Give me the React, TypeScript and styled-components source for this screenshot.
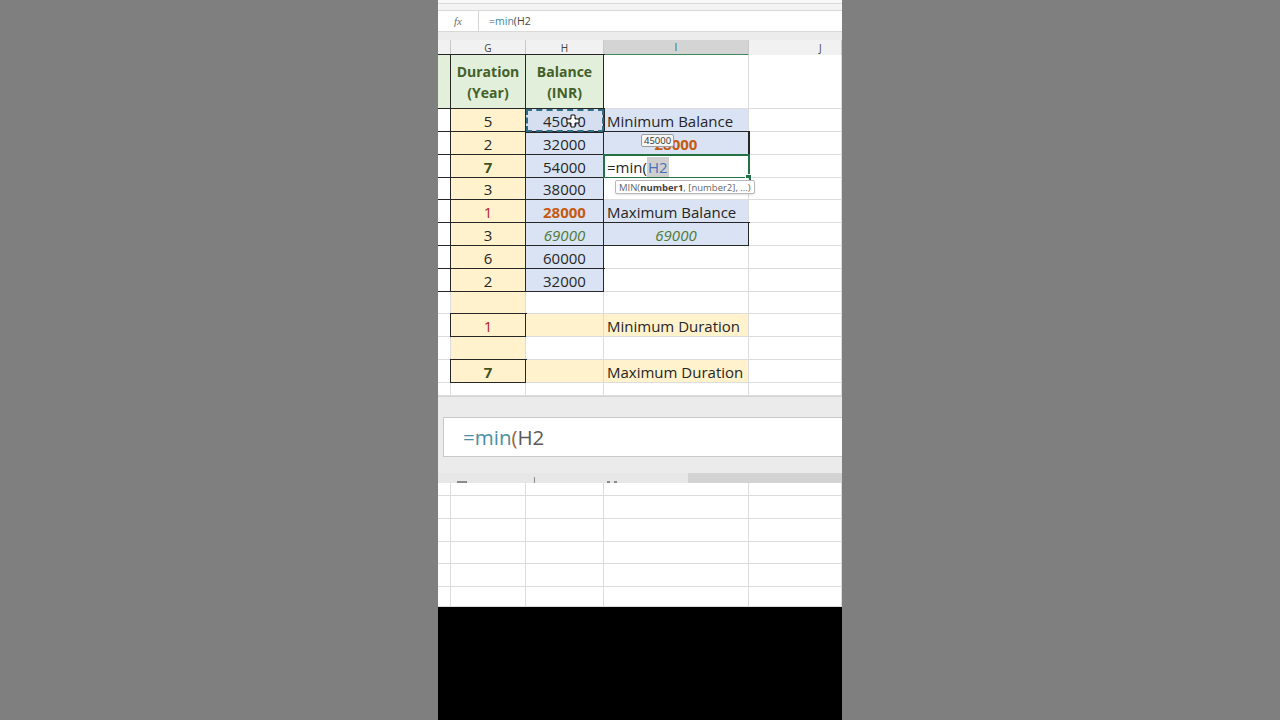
import React from 'react';
import styled, { createGlobalStyle } from 'styled-components';

const GlobalStyle = createGlobalStyle`
  html, body {
    margin: 0;
    padding: 0;
  }
  body {
    background: #7f7f7f;
    font-family: "Open Sans", "Liberation Sans", sans-serif;
  }
`;

// widths of the visible columns: sliver of F, G, H, I, J
const COLUMNS = '13px 75px 78px 145px 93px';
const GRID = '#dcdcdc';
const INK = '#262626';
const YELLOW = '#fff2cc';
const BLUE = '#dae3f3';
const GREEN = '#e2efda';

const Page = styled.div`
  display: flex;
  width: 1280px;
  height: 720px;
  background: #7f7f7f;
  overflow: hidden;
`;

const Side = styled.div`
  flex: 0 0 438px;
  background: #7f7f7f;
`;

const Screen = styled.div`
  flex: 0 0 404px;
  display: flex;
  flex-direction: column;
  background: #fff;
  overflow: hidden;
`;

const Ribbon = styled.div`
  height: 10px;
  box-sizing: border-box;
  background: #f4f4f4;
  border-top: 3px solid #f7f7f7;
  box-shadow: inset 0 1px 0 #dadada;
`;

const FormulaBar = styled.div`
  display: flex;
  height: 22px;
  box-sizing: border-box;
  background: #fff;
  border-top: 1px solid #d9d9d9;
  border-bottom: 1px solid #d9d9d9;
`;

const FxBox = styled.div`
  flex: 0 0 40px;
  display: flex;
  align-items: center;
  justify-content: center;
  border-right: 1px solid #d4d4d4;
  font-family: "Liberation Serif", serif;
  font-style: italic;
  font-size: 11px;
  color: #6d6d6d;
`;

const FormulaInput = styled.div`
  display: flex;
  align-items: center;
  padding-left: 10px;
  font-size: 10.5px;
  color: #444;
`;

const Tint = styled.span<{ $color: string }>`
  color: ${(p) => p.$color};
`;

const BarGap = styled.div`
  height: 8px;
  background: #ececec;
`;

const HeadRow = styled.div`
  display: grid;
  grid-template-columns: ${COLUMNS};
  height: 15px;
`;

const HeadCell = styled.div<{ $active?: boolean; $pad?: number }>`
  display: flex;
  align-items: center;
  justify-content: ${(p) => (p.$pad ? 'flex-start' : 'center')};
  padding-left: ${(p) => p.$pad ?? 0}px;
  box-sizing: border-box;
  background: ${(p) => (p.$active ? '#d4d4d4' : '#f1f1f1')};
  border-right: 1px solid #c9c9c9;
  border-bottom: ${(p) => (p.$active ? '2px solid #3f8a5a' : '1px solid #c9c9c9')};
  font-size: 10px;
  color: ${(p) => (p.$active ? '#2f6f45' : '#444')};
`;

const Row = styled.div<{ $h: number }>`
  display: grid;
  grid-template-columns: ${COLUMNS};
  height: ${(p) => p.$h}px;
`;

type CellProps = {
  $bg?: string;
  $box?: boolean;
  $left?: boolean;
  $color?: string;
  $bold?: boolean;
  $italic?: boolean;
  $lift?: boolean;
};

const Cell = styled.div<CellProps>`
  display: flex;
  align-items: center;
  justify-content: ${(p) => (p.$left ? 'flex-start' : 'center')};
  padding: 1px 3px 0;
  box-sizing: border-box;
  min-width: 0;
  background: ${(p) => p.$bg ?? '#fff'};
  border-right: 1px solid ${(p) => (p.$box ? INK : GRID)};
  border-bottom: 1px solid ${(p) => (p.$box ? INK : GRID)};
  box-shadow: ${(p) => (p.$box ? `0 0 0 1px ${INK}` : 'none')};
  color: ${(p) => p.$color ?? INK};
  font-size: 15px;
  font-weight: ${(p) => (p.$bold ? 700 : 400)};
  font-style: ${(p) => (p.$italic ? 'italic' : 'normal')};
  white-space: nowrap;
  position: ${(p) => (p.$lift ? 'relative' : 'static')};
  z-index: ${(p) => (p.$lift ? 1 : 'auto')};
`;

const TitleCell = styled(Cell)`
  flex-direction: column;
  justify-content: center;
  font-size: 14px;
  font-weight: 700;
  line-height: 21px;
  color: #44602a;
`;

const Marching = styled(Cell)`
  outline: 2px dashed #2f6c86;
  outline-offset: -2px;
`;

const ActiveCell = styled(Cell)`
  outline: 2px solid #217346;
  outline-offset: -1px;
  background: #fff;
`;

const FillHandle = styled.span`
  position: absolute;
  right: -4px;
  bottom: -4px;
  width: 5px;
  height: 5px;
  background: #217346;
  border: 1px solid #fff;
`;

const RefToken = styled.span`
  color: #4a72b8;
  background: #cfcfcf;
  padding: 0 1px;
`;

const CursorMark = styled.svg`
  position: absolute;
  left: 40px;
  top: 5px;
`;

const ValueTip = styled.span`
  position: absolute;
  left: 37px;
  top: 2px;
  height: 13px;
  padding: 0 2px;
  box-sizing: border-box;
  display: flex;
  align-items: center;
  background: #f6f6f6;
  border: 1px solid #9d9d9d;
  border-radius: 2px;
  font-size: 9.5px;
  font-weight: 400;
  color: #333;
`;

const ArgTip = styled.span`
  position: absolute;
  left: 11px;
  top: 2px;
  height: 14px;
  padding: 0 3px;
  box-sizing: border-box;
  display: flex;
  align-items: center;
  background: #fff;
  border: 1px solid #b9b9b9;
  border-radius: 2px;
  box-shadow: 0 1px 2px rgba(0, 0, 0, 0.12);
  font-size: 9.5px;
  color: #666;
  b {
    color: #444;
    font-weight: 700;
  }
`;

const Magnifier = styled.div`
  height: 77px;
  box-sizing: border-box;
  padding: 20px 0 0 5px;
  background: #ebebeb;
  border-top: 1px solid #d3d3d3;
`;

const BigFormula = styled.div`
  height: 40px;
  box-sizing: border-box;
  display: flex;
  align-items: center;
  padding-left: 19px;
  background: #fff;
  border: 1px solid #c9c9c9;
  border-right: none;
  font-size: 20.5px;
  color: #5a5a5a;
`;

const Strip = styled.div`
  display: flex;
  height: 10px;
`;

const StripPart = styled.div<{ $w?: number; $dark?: boolean }>`
  flex: ${(p) => (p.$w ? `0 0 ${p.$w}px` : '1')};
  display: flex;
  align-items: flex-end;
  background: ${(p) => (p.$dark ? '#d3d3d3' : '#e7e7e7')};
`;

const Nick = styled.span<{ $gap: number; $w: number; $h: number }>`
  margin-left: ${(p) => p.$gap}px;
  width: ${(p) => p.$w}px;
  height: ${(p) => p.$h}px;
  background: #8a8a8a;
`;

const Black = styled.div`
  flex: 1;
  background: #000;
`;

const dataRowHeights = [23, 23, 23, 22, 23, 23, 23, 23];
const lowerRowHeights = [13, 23, 23, 22, 23, 20];

const Blank: React.FC<{ bg?: string; box?: boolean }> = ({ bg, box }) => (
  <Cell $bg={bg} $box={box} />
);

const App: React.FC = () => {
  return (
    <>
      <GlobalStyle />
      <Page>
        <Side />
        <Screen>
          <Ribbon />
          <FormulaBar>
            <FxBox>fx</FxBox>
            <FormulaInput>
              <Tint $color="#555">=</Tint>
              <Tint $color="#3b86a3">min</Tint>
              <Tint $color="#444">(H2</Tint>
            </FormulaInput>
          </FormulaBar>
          <BarGap />

          <HeadRow>
            <HeadCell />
            <HeadCell>G</HeadCell>
            <HeadCell>H</HeadCell>
            <HeadCell $active>I</HeadCell>
            <HeadCell $pad={70}>J</HeadCell>
          </HeadRow>

          <Row $h={54}>
            <Blank bg={GREEN} box />
            <TitleCell $bg={GREEN} $box>
              <span>Duration</span>
              <span>(Year)</span>
            </TitleCell>
            <TitleCell $bg={GREEN} $box>
              <span>Balance</span>
              <span>(INR)</span>
            </TitleCell>
            <Blank />
            <Blank />
          </Row>

          <Row $h={dataRowHeights[0]}>
            <Blank box />
            <Cell $bg={YELLOW} $box>5</Cell>
            <Marching $bg="#d5dff0" $box $lift>
              45000
              <CursorMark width="14" height="14" viewBox="0 0 14 14">
                <path d="M5 1h4v4h4v4H9v4H5V9H1V5h4z" fill="#fff" stroke="#111" strokeWidth="1" />
              </CursorMark>
            </Marching>
            <Cell $bg={BLUE} $left>Minimum Balance</Cell>
            <Blank />
          </Row>

          <Row $h={dataRowHeights[1]}>
            <Blank box />
            <Cell $bg={YELLOW} $box>2</Cell>
            <Cell $bg={BLUE} $box>32000</Cell>
            <Cell $bg={BLUE} $box $bold $color="#c55a11" $lift>
              28000
              <ValueTip>45000</ValueTip>
            </Cell>
            <Blank />
          </Row>

          <Row $h={dataRowHeights[2]}>
            <Blank box />
            <Cell $bg={YELLOW} $box $bold $color="#3f5320">7</Cell>
            <Cell $bg={BLUE} $box>54000</Cell>
            <ActiveCell $left $lift>
              =min(<RefToken>H2</RefToken>
              <FillHandle />
            </ActiveCell>
            <Blank />
          </Row>

          <Row $h={dataRowHeights[3]}>
            <Blank box />
            <Cell $bg={YELLOW} $box>3</Cell>
            <Cell $bg={BLUE} $box>38000</Cell>
            <Cell $left $lift>
              <ArgTip>
                MIN(<b>number1</b>, [number2], ...)
              </ArgTip>
            </Cell>
            <Blank />
          </Row>

          <Row $h={dataRowHeights[4]}>
            <Blank box />
            <Cell $bg={YELLOW} $box $color="#b3202c">1</Cell>
            <Cell $bg={BLUE} $box $bold $color="#c55a11">28000</Cell>
            <Cell $bg={BLUE} $left>Maximum Balance</Cell>
            <Blank />
          </Row>

          <Row $h={dataRowHeights[5]}>
            <Blank box />
            <Cell $bg={YELLOW} $box>3</Cell>
            <Cell $bg={BLUE} $box $italic $color="#4f7a35">69000</Cell>
            <Cell $bg={BLUE} $box $italic $color="#4f7a35">69000</Cell>
            <Blank />
          </Row>

          <Row $h={dataRowHeights[6]}>
            <Blank box />
            <Cell $bg={YELLOW} $box>6</Cell>
            <Cell $bg={BLUE} $box>60000</Cell>
            <Blank />
            <Blank />
          </Row>

          <Row $h={dataRowHeights[7]}>
            <Blank box />
            <Cell $bg={YELLOW} $box>2</Cell>
            <Cell $bg={BLUE} $box>32000</Cell>
            <Blank />
            <Blank />
          </Row>

          <Row $h={22}>
            <Blank />
            <Blank bg={YELLOW} />
            <Blank />
            <Blank />
            <Blank />
          </Row>

          <Row $h={23}>
            <Blank />
            <Cell $bg={YELLOW} $box $color="#b3202c">1</Cell>
            <Blank bg={YELLOW} />
            <Cell $bg={YELLOW} $left>Minimum Duration</Cell>
            <Blank />
          </Row>

          <Row $h={23}>
            <Blank />
            <Blank bg={YELLOW} />
            <Blank />
            <Blank />
            <Blank />
          </Row>

          <Row $h={23}>
            <Blank />
            <Cell $bg={YELLOW} $box $bold $color="#3f5320">7</Cell>
            <Blank bg={YELLOW} />
            <Cell $bg={YELLOW} $left>Maximum Duration</Cell>
            <Blank />
          </Row>

          <Row $h={13}>
            <Blank />
            <Blank />
            <Blank />
            <Blank />
            <Blank />
          </Row>

          <Magnifier>
            <BigFormula>
              <Tint $color="#4a8ea3">=min</Tint>
              <Tint $color="#9a6440">(</Tint>
              <Tint $color="#5a5a5a">H2</Tint>
            </BigFormula>
          </Magnifier>

          <Strip>
            <StripPart $w={250}>
              <Nick $gap={19} $w={10} $h={2} />
              <Nick $gap={67} $w={1} $h={6} />
              <Nick $gap={72} $w={3} $h={2} />
              <Nick $gap={4} $w={3} $h={2} />
            </StripPart>
            <StripPart $dark />
          </Strip>

          {lowerRowHeights.map((h, i) => (
            <Row $h={h} key={i}>
              <Blank />
              <Blank />
              <Blank />
              <Blank />
              <Blank />
            </Row>
          ))}

          <Black />
        </Screen>
        <Side />
      </Page>
    </>
  );
};

export default App;
